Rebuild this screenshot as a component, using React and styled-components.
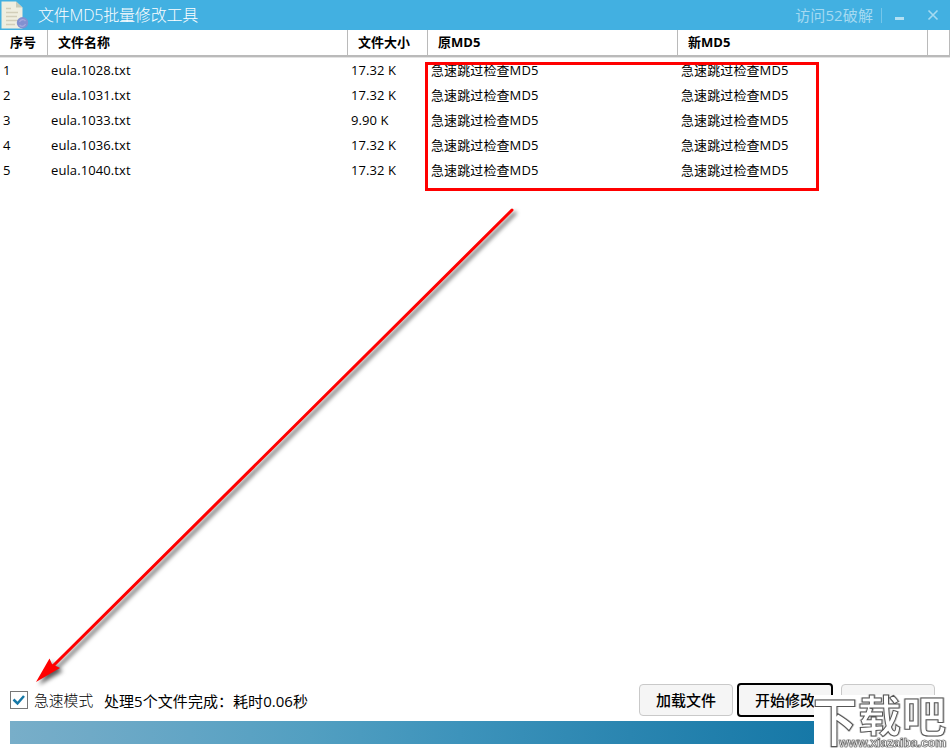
import styled, { createGlobalStyle } from "styled-components";

const GlobalStyle = createGlobalStyle`
  * {
    box-sizing: border-box;
  }

  body {
    margin: 0;
    background-color: #fff;
    color: #000;
    font-family: "Open Sans", "Noto Sans CJK SC", sans-serif;
  }
`;

const files = [
  { id: 1, name: "eula.1028.txt", size: "17.32 K" },
  { id: 2, name: "eula.1031.txt", size: "17.32 K" },
  { id: 3, name: "eula.1033.txt", size: "9.90 K" },
  { id: 4, name: "eula.1036.txt", size: "17.32 K" },
  { id: 5, name: "eula.1040.txt", size: "17.32 K" },
];

const Window = styled.div`
  position: relative;
  display: flex;
  flex-direction: column;
  width: 950px;
  height: 750px;
  overflow: hidden;
`;

// Title bar styling
const TitleBar = styled.header`
  display: flex;
  align-items: center;
  height: 30px;
  flex-shrink: 0;
  background-color: #42b0e1;
`;

const AppIcon = styled.svg`
  width: 30px;
  height: 30px;
`;

const Title = styled.h1`
  flex: 1;
  margin: 0 0 0 8px;
  font-size: 16px;
  line-height: 30px;
  font-weight: 300;
  letter-spacing: -0.2px;
  color: #fff;
`;

const SiteLink = styled.span`
  padding-right: 8px;
  border-right: 1px solid #75c6ea;
  font-size: 15px;
  line-height: 15px;
  letter-spacing: 0.1px;
  color: #a5daf1;
`;

const WindowButtons = styled.svg`
  width: 68px;
  height: 30px;
`;

// Table styling
const columns = "47px 300px 80px 250px 250px 1fr";

const TableHead = styled.div`
  display: grid;
  grid-template-columns: ${columns};
  height: 27px;
  flex-shrink: 0;
  border-bottom: 2px solid #bababa;
  border-right: 1px solid #bababa;
  box-shadow: 0 1px 0 #e3e3e3;
`;

const HeadCell = styled.div`
  padding-left: 10px;
  font-size: 13px;
  font-weight: 700;
  line-height: 24px;
  white-space: nowrap;

  & + & {
    border-left: 1px solid #bababa;
  }
`;

const TableBody = styled.div`
  flex: 1;
  padding-top: 1px;
`;

const Row = styled.div`
  display: grid;
  grid-template-columns: ${columns};
  height: 25px;
`;

const Cell = styled.div`
  padding-left: ${({ $first }) => ($first ? 3 : 4)}px;
  font-size: 13px;
  line-height: 25px;
  letter-spacing: 0.1px;
  white-space: nowrap;
`;

// Footer styling
const Footer = styled.footer`
  display: flex;
  flex-direction: column;
  padding: 0 15px 0 10px;
  height: 67px;
  flex-shrink: 0;
`;

const Controls = styled.div`
  display: flex;
  align-items: center;
  height: 34px;
`;

const CheckLabel = styled.div`
  display: flex;
  align-items: center;
  gap: 6px;
  width: 94px;
  font-size: 14.8px;
  font-weight: 300;
  line-height: 32px;
  white-space: nowrap;
`;

const CheckBox = styled.svg`
  width: 18px;
  height: 18px;
  flex-shrink: 0;
`;

const Status = styled.span`
  flex: 1;
  padding-top: 1px;
  font-size: 15px;
  letter-spacing: 0.05px;
`;

const Button = styled.button`
  width: ${({ $active }) => ($active ? 96 : 94)}px;
  height: ${({ $active }) => ($active ? 34 : 32)}px;
  margin-left: ${({ $active }) => ($active ? 4 : 8)}px;
  padding: 0 0 2px;
  border: ${({ $active }) => ($active ? "2px solid #000" : "1px solid #c9c9c9")};
  border-radius: 4px;
  background-color: #f5f5f5;
  color: #000;
  font-family: inherit;
  font-size: 15px;
  font-weight: 500;
`;

const Progress = styled.div`
  height: 23px;
  margin-top: 4px;
  background: linear-gradient(
    to right,
    #78aec9 0,
    #6faac7 80px,
    #62a5c5 180px,
    #529fc1 300px,
    #3d93bb 450px,
    #2a85b0 620px,
    #1678a7 804px,
    #1678a7 100%
  );
`;

// Annotations drawn over the window
const Highlight = styled.div`
  position: absolute;
  left: 425px;
  top: 62px;
  width: 394px;
  height: 129px;
  border: 3px solid #f00;
`;

const Arrow = styled.svg`
  position: absolute;
  left: 0;
  top: 190px;
  width: 560px;
  height: 510px;
  filter: drop-shadow(3px 3px 2px rgba(0, 0, 0, 0.65));
`;

const Watermark = styled.div`
  position: absolute;
  right: 0;
  bottom: 0;
  width: 136px;
  height: 55px;
  background-color: #fff;
`;

const WatermarkArt = styled.svg`
  display: block;
  width: 136px;
  height: 55px;
  overflow: visible;
`;

const WatermarkText = styled.text`
  font-size: ${({ $size }) => $size}px;
  font-weight: 700;
  fill: #fff;
  stroke: #555;
  stroke-width: ${({ $stroke = 1 }) => $stroke}px;
  filter: drop-shadow(1px 0 0 #ccc) drop-shadow(-1px 0 0 #ddd);
`;

export default function App() {
  return (
    <>
      <GlobalStyle />
      <Window>
        <TitleBar>
          <AppIcon viewBox="0 0 30 30">
            <path d="M1.500 1.500H16l6.500 6V28.500H1.500z" fill="#efeee0" />
            <path d="M16 1.500l6.500 6H16z" fill="#c8cbb9" />
            <path
              d="M6 8.500h5M6 12.500h12M6 16.500h11M6 20.500h12M6 24.500h9"
              stroke="#d2ceb9"
              strokeWidth="1.3"
            />
            <circle cx="22.500" cy="22.800" r="5.700" fill="#8290d0" />
            <path
              d="M19.500 22a3.500 3.500 0 0 1 6-1M25.500 24a3.500 3.500 0 0 1-6 1"
              fill="none"
              stroke="#a2a8dc"
              strokeWidth="1.3"
            />
          </AppIcon>
          <Title>文件MD5批量修改工具</Title>
          <SiteLink>访问52破解</SiteLink>
          <WindowButtons viewBox="0 0 68 30">
            <path d="M13 18.500h9" stroke="#b3e0f3" strokeWidth="3" />
            <path
              d="M46.500 10.500l9 9M55.500 10.500l-9 9"
              stroke="#a5daf1"
              strokeWidth="1.6"
            />
          </WindowButtons>
        </TitleBar>

        <TableHead>
          <HeadCell>序号</HeadCell>
          <HeadCell>文件名称</HeadCell>
          <HeadCell>文件大小</HeadCell>
          <HeadCell>原MD5</HeadCell>
          <HeadCell>新MD5</HeadCell>
          <HeadCell />
        </TableHead>

        <TableBody>
          {files.map((file) => (
            <Row key={file.id}>
              <Cell $first>{file.id}</Cell>
              <Cell>{file.name}</Cell>
              <Cell>{file.size}</Cell>
              <Cell>急速跳过检查MD5</Cell>
              <Cell>急速跳过检查MD5</Cell>
            </Row>
          ))}
        </TableBody>

        <Footer>
          <Controls>
            <CheckLabel>
              <CheckBox viewBox="0 0 18 18">
                <rect x="0.500" y="0.500" width="17" height="17" fill="#fff" stroke="#777" />
                <path d="M3.500 8.500l4 4L14 5" fill="none" stroke="#1678a7" strokeWidth="2.500" />
              </CheckBox>
              急速模式
            </CheckLabel>
            <Status>处理5个文件完成：耗时0.06秒</Status>
            <Button>加载文件</Button>
            <Button $active>开始修改</Button>
            <Button />
          </Controls>
          <Progress />
        </Footer>

        <Highlight />
        <Arrow viewBox="0 190 560 510">
          <path d="M512 210L54 665" stroke="#f00" strokeWidth="3" strokeLinecap="round" />
          <path d="M36 682L49.500 658.500L52 664L60 668z" fill="#f00" />
        </Arrow>
        <Watermark>
          <WatermarkArt viewBox="0 0 136 55">
            <WatermarkText $size={44} transform="translate(-1 47) scale(1 1.220)">
              下
            </WatermarkText>
            <WatermarkText $size={43} x="44" y="37">
              载
            </WatermarkText>
            <WatermarkText $size={44} x="88" y="38">
              吧
            </WatermarkText>
            <WatermarkText
              $size={12}
              $stroke={0.6}
              x="25"
              y="52"
              textLength="107"
              lengthAdjust="spacingAndGlyphs"
              fontFamily="Liberation Sans"
            >
              www.xiazaiba.com
            </WatermarkText>
          </WatermarkArt>
        </Watermark>
      </Window>
    </>
  );
}
